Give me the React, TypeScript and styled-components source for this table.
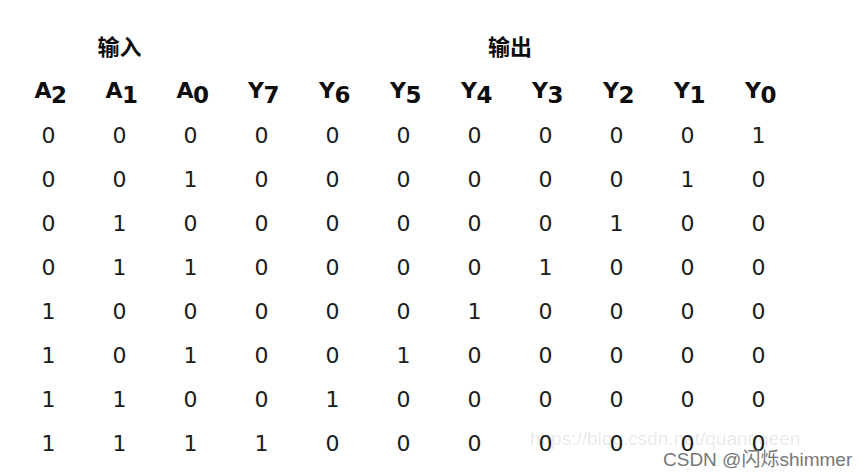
import React from 'react';
import styled, { createGlobalStyle } from 'styled-components';

const GlobalStyle = createGlobalStyle`
	html, body {
		margin: 0;
		padding: 0;
		background: #ffffff;
	}
`;

const headers = [
	['A', '2'],
	['A', '1'],
	['A', '0'],
	['Y', '7'],
	['Y', '6'],
	['Y', '5'],
	['Y', '4'],
	['Y', '3'],
	['Y', '2'],
	['Y', '1'],
	['Y', '0'],
];

const rows = [0, 1, 2, 3, 4, 5, 6, 7].map((n) => {
	const a = [(n >> 2) & 1, (n >> 1) & 1, n & 1];
	const y = [7, 6, 5, 4, 3, 2, 1, 0].map((i) => (i === n ? 1 : 0));
	return [...a, ...y];
});

const Page = styled.div`
	position: relative;
	width: 865px;
	height: 475px;
	overflow: hidden;
	background: #ffffff;
	padding: 23px 0 0 13px;
	box-sizing: border-box;
`;

const Grid = styled.div`
	display: grid;
	grid-template-columns: repeat(11, 71px);
	grid-template-rows: 44px 46px repeat(8, 44px);
	color: #1c1c1c;
`;

const GroupTitle = styled.div<{ $span: number }>`
	grid-column: span ${(p) => p.$span};
	display: flex;
	align-items: center;
	justify-content: center;
	font-family: 'Noto Sans CJK SC', sans-serif;
	font-weight: 700;
	font-size: 22px;
	color: #0d0d0d;
`;

const HeadCell = styled.div`
	display: flex;
	align-items: center;
	justify-content: center;
	font-family: 'DejaVu Sans', Verdana, sans-serif;
	font-weight: 700;
	font-size: 22px;
	color: #0d0d0d;
	padding-left: 4px;
	letter-spacing: -0.5px;
`;

const Sub = styled.span`
	font-size: 23px;
	position: relative;
	top: 5px;
`;

const Cell = styled.div`
	display: flex;
	align-items: center;
	justify-content: center;
	font-family: 'DejaVu Sans', Verdana, sans-serif;
	font-size: 22px;
`;

const UrlMark = styled.div`
	position: absolute;
	left: 530px;
	top: 428px;
	font-family: 'Liberation Sans', Arial, sans-serif;
	font-size: 19px;
	color: rgba(0, 0, 0, 0.1);
	white-space: nowrap;
`;

const Credit = styled.div`
	position: absolute;
	left: 663px;
	top: 444px;
	font-family: 'Liberation Sans', Arial, 'Noto Sans CJK SC', sans-serif;
	font-size: 19px;
	color: #767676;
	white-space: nowrap;
	text-shadow: 0 0 1px #fff;
`;

export default function App() {
	return (
		<Page>
			<GlobalStyle />
			<Grid>
				<GroupTitle $span={3}>输入</GroupTitle>
				<GroupTitle $span={8}>输出</GroupTitle>
				{headers.map(([l, d], i) => (
					<HeadCell key={'h' + i}>
						{l}
						<Sub>{d}</Sub>
					</HeadCell>
				))}
				{rows.map((r, ri) =>
					r.map((v, ci) => <Cell key={ri + '-' + ci}>{v}</Cell>)
				)}
			</Grid>
			<UrlMark>https://blog.csdn.net/quanqgeen</UrlMark>
			<Credit>CSDN @闪烁shimmer</Credit>
		</Page>
	);
}
